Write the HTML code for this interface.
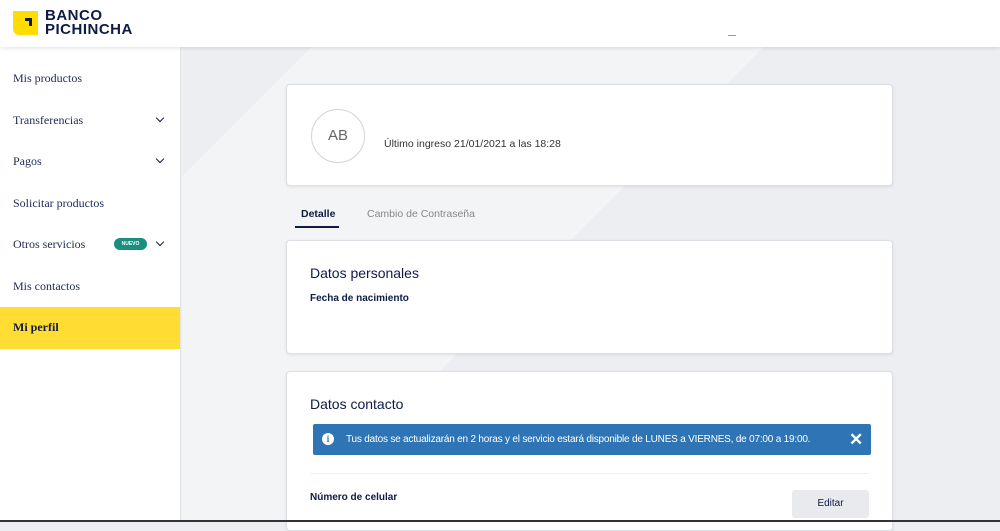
<!DOCTYPE html>
<html><head><style>
*{margin:0;padding:0;box-sizing:border-box}
body{width:1000px;height:522px;overflow:hidden;background:#eceef1;font-family:"Liberation Sans",sans-serif;position:relative;color:#0f1a45}
.hdr{position:absolute;left:0;top:0;width:1000px;height:47px;background:#fff;box-shadow:0 1px 4px rgba(0,0,0,.12);z-index:3}
.logo{position:absolute;left:13px;top:11px;width:25px;height:24px;background:#ffdd00;border-radius:0 0 0 6px}
.logo i{position:absolute;left:12px;top:7px;width:7px;height:8px;border-top:3px solid #0f1a45;border-right:3px solid #0f1a45}
.lt{position:absolute;left:45px;top:9px;font-weight:bold;font-size:15px;line-height:14px;color:#0f1a45;letter-spacing:.5px}
.side{position:absolute;left:0;top:47px;width:181px;height:475px;background:#fff;border-right:1px solid #e3e5e8;font-family:"Liberation Serif",serif;font-size:12px;color:#1e2a55;padding-top:11px}
.it{height:41.5px;line-height:41.5px;padding-left:13px;position:relative}
.it .ch{position:absolute;left:157px;top:15px;width:6px;height:6px;border-right:1.5px solid #0f1a45;border-bottom:1.5px solid #0f1a45;transform:rotate(45deg)}
.act{background:#ffdd33;font-weight:bold;color:#0f1a45}
.nv{position:absolute;left:114px;top:14px;width:33px;height:12px;border-radius:6px;background:#1a8f7e;color:#fff;font:bold 5px "Liberation Sans",sans-serif;line-height:12px;text-align:center}
.diag{position:absolute;left:182px;top:47px;width:818px;height:475px;background:linear-gradient(135deg,#eceef1 0,#eceef1 10%,#f3f4f6 10%,#f3f4f6 45%,#eceef1 45%)}
.card{position:absolute;left:286px;width:607px;background:#fff;border:1px solid #dcdfe3;border-radius:4px;box-shadow:0 1px 3px rgba(0,0,0,.08)}
.av{position:absolute;left:24px;top:24px;width:54px;height:54px;border-radius:50%;border:1px solid #cfd3d8;text-align:center;line-height:52px;font-size:15px;color:#666}
.t{position:absolute;font-size:11px}
h3{position:absolute;left:23px;font-size:14px;font-weight:normal;color:#0f1a45}
</style></head><body>
<div class="hdr"><div class="logo"><i></i></div><div class="lt">BANCO<br>PICHINCHA</div>
<div style="position:absolute;left:728px;top:35px;width:8px;height:1px;background:#999"></div></div>
<div class="side">
<div class="it">Mis productos</div>
<div class="it">Transferencias<span class="ch"></span></div>
<div class="it">Pagos<span class="ch"></span></div>
<div class="it">Solicitar productos</div>
<div class="it">Otros servicios<span class="nv">NUEVO</span><span class="ch"></span></div>
<div class="it">Mis contactos</div>
<div class="it act">Mi perfil</div>
</div>
<div class="diag"></div>
<div class="card" style="top:84px;height:102px"><div class="av">AB</div><div class="t" style="left:97px;top:53px;color:#333;font-size:10.5px">Último ingreso 21/01/2021 a las 18:28</div></div>
<div class="t" style="left:301px;top:208px;color:#0f1a45;font-weight:bold;font-size:10.5px">Detalle</div>
<div style="position:absolute;left:295px;top:226px;width:44px;height:2px;background:#0f1a45"></div>
<div class="t" style="left:367px;top:208px;color:#888;font-size:10.5px">Cambio de Contraseña</div>
<div class="card" style="top:240px;height:114px"><h3 style="top:24px">Datos personales</h3><div class="t" style="left:23px;top:52px;font-size:10px;font-weight:bold">Fecha de nacimiento</div></div>
<div class="card" style="top:371px;height:160px"><h3 style="top:24px">Datos contacto</h3>
<div style="position:absolute;left:26px;top:52px;width:558px;height:31px;background:#2f75b5;border-radius:2px;color:#fff;font-size:10px;letter-spacing:-.2px;line-height:31px;padding-left:33px;white-space:nowrap">Tus datos se actualizarán en 2 horas y el servicio estará disponible de LUNES a VIERNES, de 07:00 a 19:00.
<span style="position:absolute;left:9px;top:9px;width:12px;height:12px;border-radius:50%;background:#fff;color:#2f75b5;font:bold 9px/12px 'Liberation Serif',serif;text-align:center;letter-spacing:0">i</span>
<span style="position:absolute;right:8px;top:0;font-size:17px;font-weight:bold">✕</span></div>
<div style="position:absolute;left:24px;top:101px;width:558px;height:1px;background:#eceef0"></div>
<div class="t" style="left:23px;top:120px;font-size:10px;font-weight:bold">Número de celular</div>
<div style="position:absolute;left:505px;top:118px;width:77px;height:28px;background:#e8eaee;border-radius:3px;font-size:10px;text-align:center;line-height:28px">Editar</div></div>
<div style="position:absolute;left:0;top:520px;width:1000px;height:2px;background:#333"></div>
</body></html>
